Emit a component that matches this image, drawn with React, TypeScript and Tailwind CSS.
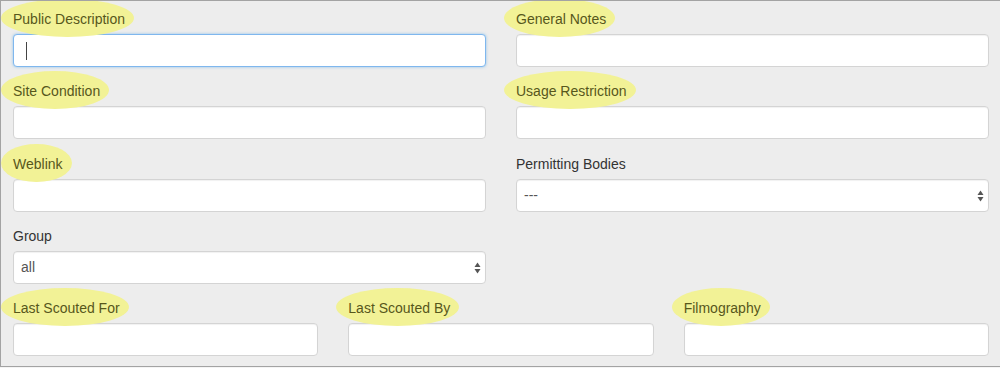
import clsx from "clsx";

type Field = { label: string; hl?: boolean; kind?: "input" | "select"; value?: string; focus?: boolean };

function Label({ field }: { field: Field }) {
  return (
    <div className="h-5 leading-5 mb-[5px]">
      <span className="relative inline-block">
        {field.hl && <span className="absolute -left-[12px] -right-[9px] -top-[10px] -bottom-[8px] rounded-[50%] bg-[#f2f296]" />}
        <span className={clsx("relative text-[14px]", field.hl ? "text-[#57571c]" : "text-[#333]")}>{field.label}</span>
      </span>
    </div>
  );
}

function Control({ field }: { field: Field }) {
  if (field.kind === "select") {
    return (
      <div className="h-[33px] rounded-[4px] border border-[#d4d4d4] bg-white shadow-[inset_0_1px_1px_rgba(0,0,0,0.06)] flex items-center justify-between pl-[7px] pr-[4px]">
        <span className="text-[14px] text-[#555]">{field.value}</span>
        <svg width="7" height="12" viewBox="0 0 7 12" className="text-[#555]">
          <path d="M3.5 0.5 L6.5 5 L0.5 5 Z" fill="currentColor" />
          <path d="M3.5 11.5 L6.5 7 L0.5 7 Z" fill="currentColor" />
        </svg>
      </div>
    );
  }
  return (
    <div
      className={clsx(
        "h-[33px] rounded-[4px] border bg-white flex items-center pl-[12px]",
        field.focus
          ? "border-[#7fb7ee] shadow-[0_0_3px_rgba(102,175,233,0.7)]"
          : "border-[#d4d4d4] shadow-[inset_0_1px_1px_rgba(0,0,0,0.06)]"
      )}
    >
      {field.focus && <span className="w-px h-[18px] bg-[#444]" />}
    </div>
  );
}

function FormGroup({ field }: { field?: Field }) {
  if (!field) return <div />;
  return (
    <div className="mb-[14px]">
      <Label field={field} />
      <Control field={field} />
    </div>
  );
}

const rows: (Field | undefined)[][] = [
  [{ label: "Public Description", hl: true, focus: true }, { label: "General Notes", hl: true }],
  [{ label: "Site Condition", hl: true }, { label: "Usage Restriction", hl: true }],
  [{ label: "Weblink", hl: true }, { label: "Permitting Bodies", kind: "select", value: "---" }],
  [{ label: "Group", kind: "select", value: "all" }, undefined],
];

const lastRow: Field[] = [
  { label: "Last Scouted For", hl: true },
  { label: "Last Scouted By", hl: true },
  { label: "Filmography", hl: true },
];

export default function App() {
  return (
    <div className="w-[1000px] h-[368px] bg-[#f4f4f4]" style={{ fontFamily: '"Liberation Sans", Arial, sans-serif' }}>
      <div className="h-[367px] bg-[#ededed] border-t border-l border-b border-[#a3a3a3] pl-[12px] pr-[11px] pt-[8px] overflow-hidden">
        {rows.map((row, i) => (
          <div key={i} className={clsx("grid grid-cols-2 gap-x-[30px]", i === 2 && "mt-[1px]")}>
            {row.map((f, j) => (
              <FormGroup key={j} field={f} />
            ))}
          </div>
        ))}
        <div className="grid grid-cols-3 gap-x-[30px]">
          {lastRow.map((f) => (
            <FormGroup key={f.label} field={f} />
          ))}
        </div>
      </div>
    </div>
  );
}
